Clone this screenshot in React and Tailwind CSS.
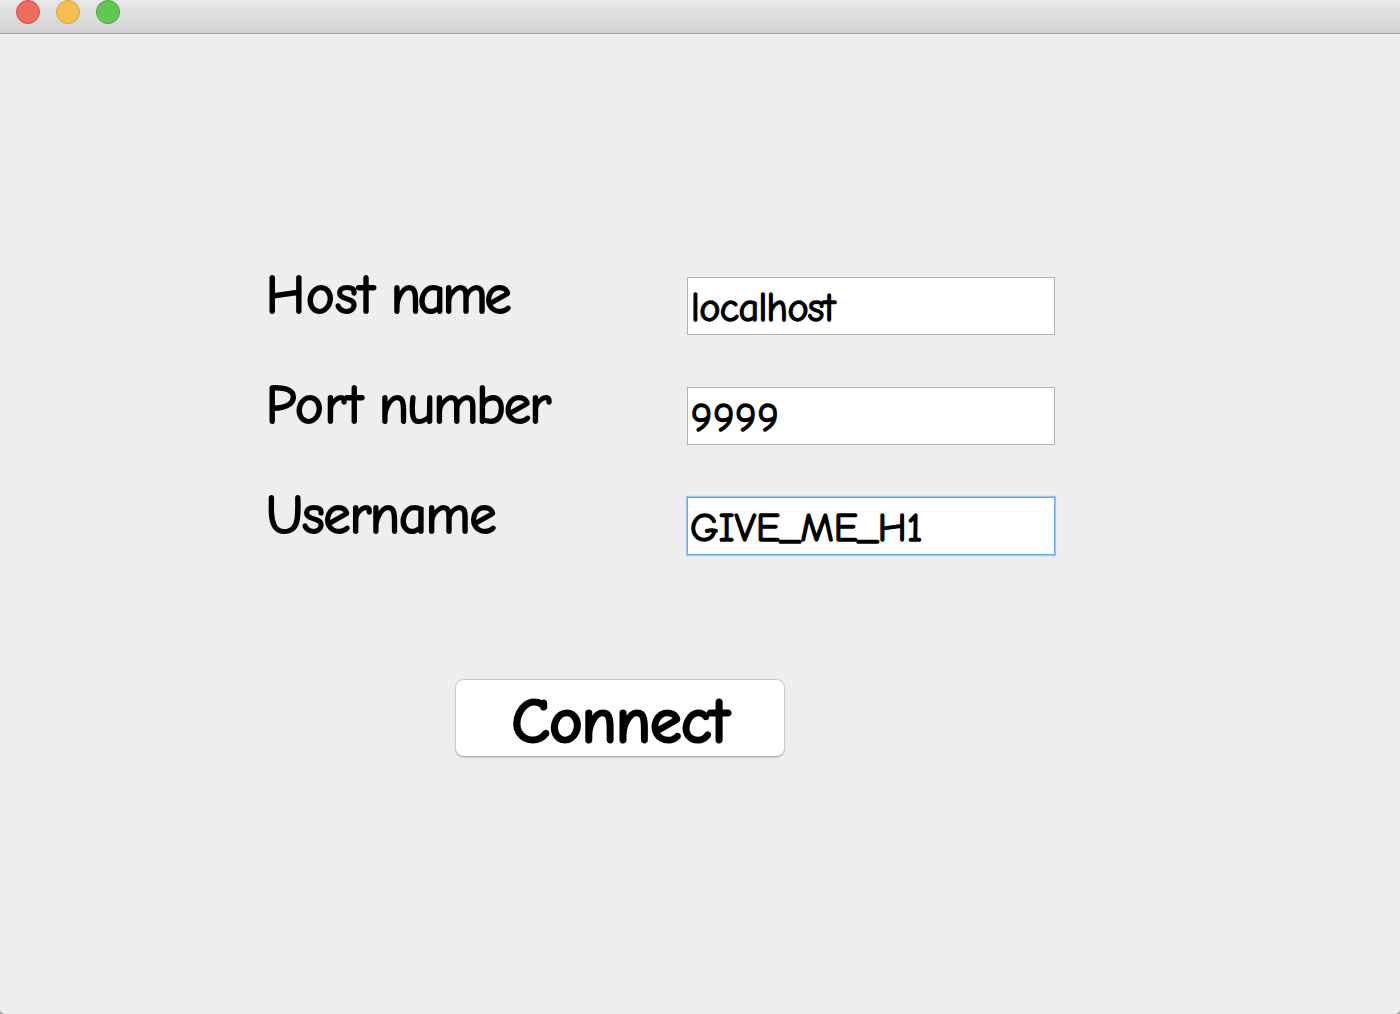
const fields = [
  {
    words: [
      { text: "Host", className: "w-[125px] tracking-[1px]" },
      { text: "name", className: "tracking-[-3px]" },
    ],
    value: "localhost",
    valueClass: "tracking-[-0.6px]",
  },
  {
    words: [
      { text: "Port", className: "w-[113px] tracking-[1px]" },
      { text: "number", className: "tracking-[-1.5px]" },
    ],
    value: "9999",
    valueClass: "tracking-[0.9px]",
  },
  {
    words: [{ text: "Username", className: "tracking-[-1px]" }],
    value: "GIVE_ME_H1",
    valueClass: "-ml-px tracking-[0.1px]",
    focused: true,
  },
];

function TitleBar() {
  return (
    <header className="flex h-[34px] shrink-0 gap-4 border-b border-[#aaa] bg-linear-to-b from-[#e8e8e8] to-[#d1d1d1] pl-4">
      <span className="size-6 rounded-full border border-[#dc4c45] bg-[#ed6b60]" />
      <span className="size-6 rounded-full border border-[#d9a13c] bg-[#f5be50]" />
      <span className="size-6 rounded-full border border-[#46a83c] bg-[#62c655]" />
    </header>
  );
}

function Field({ words, value, valueClass, focused }) {
  return (
    <div className="flex h-[58px] items-start">
      <div className="flex w-[421px] text-[54px] leading-[38px] [-webkit-text-stroke:2px_black]">
        {words.map(({ text, className }) => (
          <span key={text} className={className}>
            {text}
          </span>
        ))}
      </div>
      <div
        className={
          focused
            ? "h-[58px] w-[368px] border border-[#70a7e6] bg-white pl-[3px] shadow-[0_0_1px_1px_#9ac6f6]"
            : "h-[58px] w-[368px] border border-[#b3b3b3] bg-white pl-[3px]"
        }
      >
        <span className={`block text-[40px] leading-[60px] [-webkit-text-stroke:1.4px_black] ${valueClass}`}>{value}</span>
      </div>
    </div>
  );
}

export default function App() {
  return (
    <div className="h-[1014px] w-[1400px] bg-[#a0a0a0]">
      <main className="flex h-full flex-col overflow-hidden rounded-b-[5px] bg-[#eee] font-['Comic_Sans_MS','Comic_Neue',Lato,sans-serif] text-black">
        <TitleBar />
        <form className="flex flex-col pt-[243px] pl-[266px]">
          <div className="flex flex-col gap-[52px]">
            {fields.map((field) => (
              <Field key={field.value} {...field} />
            ))}
          </div>
          <button
            type="button"
            className="mt-[124px] ml-[189px] flex h-[78px] w-[330px] items-center justify-center rounded-[9px] border border-[#c8c8c8] border-b-[#b0b0b0] bg-white pt-[7px] shadow-[0_1px_1px_#c9c9c9]"
          >
            <span className="text-[62px] leading-[70px] tracking-[-0.2px] [-webkit-text-stroke:3.2px_black]">Connect</span>
          </button>
        </form>
      </main>
    </div>
  );
}
